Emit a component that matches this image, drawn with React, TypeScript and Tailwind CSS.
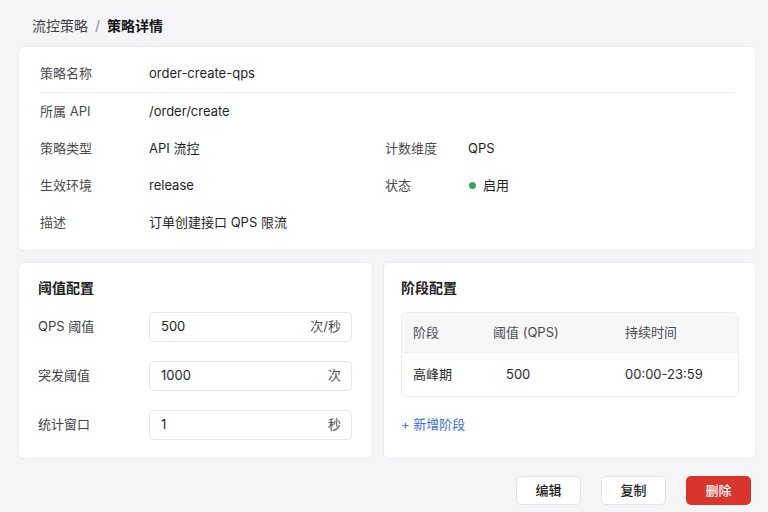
import React from "react";

const FONT = "font-['Inter','Noto_Sans_CJK_SC',sans-serif]";

function InfoRow({ label, value }: { label: string; value: React.ReactNode }) {
  return (
    <div className="flex w-[345px] items-center">
      <span className="w-[109px] text-[13px] text-[#4b4b50]">{label}</span>
      <span className="text-[13px] text-[#1f1f23]">{value}</span>
    </div>
  );
}

const THRESHOLDS = [
  { label: "QPS 阈值", value: "500", unit: "次/秒" },
  { label: "突发阈值", value: "1000", unit: "次" },
  { label: "统计窗口", value: "1", unit: "秒" },
];

export default function App() {
  return (
    <div className={`min-h-[512px] w-[768px] bg-[#f5f5f7] pl-[18px] pr-[12px] ${FONT}`}>
      <div className="flex h-[46px] items-start pl-[14px] pt-[17px] text-[14px] leading-[18px]">
        <span className="text-[#3f3f45]">流控策略</span>
        <span className="mx-[7px] text-[#8a8a90]">/</span>
        <span className="font-semibold text-[#16161a]">策略详情</span>
      </div>

      <div className="rounded-[6px] border border-[#ececef] bg-white pt-[9px] pb-[9px]">
        <div className="flex h-[36px] items-center px-[21px]">
          <InfoRow label="策略名称" value="order-create-qps" />
        </div>
        <div className="mx-[21px] h-px bg-[#f0f0f2]" />
        <div className="flex h-[37px] items-center px-[21px]">
          <InfoRow label="所属 API" value="/order/create" />
        </div>
        <div className="flex h-[37px] items-center px-[21px]">
          <InfoRow label="策略类型" value="API 流控" />
          <div className="flex items-center">
            <span className="w-[83px] text-[13px] text-[#4b4b50]">计数维度</span>
            <span className="text-[13px] text-[#1f1f23]">QPS</span>
          </div>
        </div>
        <div className="flex h-[37px] items-center px-[21px]">
          <InfoRow label="生效环境" value="release" />
          <div className="flex items-center">
            <span className="w-[83px] text-[13px] text-[#4b4b50]">状态</span>
            <span className="flex items-center text-[13px] text-[#1f1f23]">
              <span className="mr-[7px] ml-[1px] h-[7px] w-[7px] rounded-full bg-[#3aa65a]" />
              启用
            </span>
          </div>
        </div>
        <div className="flex h-[37px] items-center px-[21px]">
          <InfoRow label="描述" value="订单创建接口 QPS 限流" />
        </div>
      </div>

      <div className="mt-[11px] grid grid-cols-[355px_1fr] gap-[10px]">
        <div className="h-[197px] rounded-[6px] border border-[#ececef] bg-white pl-[19px] pr-[20px] pt-[16px]">
          <h3 className="text-[14px] font-semibold leading-[18px] text-[#1f1f23]">阈值配置</h3>
          <div className="mt-[15px] flex flex-col gap-[19px]">
            {THRESHOLDS.map((t) => (
              <div key={t.label} className="flex items-center">
                <span className="w-[111px] text-[13px] text-[#3f3f45]">{t.label}</span>
                <div className="flex h-[30px] flex-1 items-center justify-between rounded-[5px] border border-[#e4e4e8] bg-white pl-[11px] pr-[10px] text-[13px]">
                  <span className="text-[#1f1f23]">{t.value}</span>
                  <span className="text-[#4b4b50]">{t.unit}</span>
                </div>
              </div>
            ))}
          </div>
        </div>

        <div className="h-[197px] rounded-[6px] border border-[#ececef] bg-white pl-[17px] pr-[16px] pt-[16px]">
          <h3 className="text-[14px] font-semibold leading-[18px] text-[#1f1f23]">阶段配置</h3>
          <div className="mt-[15px] overflow-hidden rounded-[6px] border border-[#ececef] text-[13px]">
            <div className="flex h-[39px] items-center bg-[#f7f7f8] pl-[11px] text-[#4b4b50]">
              <span className="w-[80px]">阶段</span>
              <span className="w-[132px]">阈值 (QPS)</span>
              <span>持续时间</span>
            </div>
            <div className="flex h-[44px] items-center border-t border-[#f0f0f2] pl-[11px] text-[#2a2a2e]">
              <span className="w-[93px]">高峰期</span>
              <span className="w-[119px]">500</span>
              <span>00:00-23:59</span>
            </div>
          </div>
          <div className="mt-[18px] text-[13px] text-[#3a6fd6]">+ 新增阶段</div>
        </div>
      </div>

      <div className="mt-[17px] flex justify-end gap-[20px] pr-[5px]">
        <button className="h-[29px] w-[65px] rounded-[5px] border border-[#e4e4e8] bg-white text-[13px] font-medium text-[#1f1f23]">编辑</button>
        <button className="h-[29px] w-[65px] rounded-[5px] border border-[#e4e4e8] bg-white text-[13px] font-medium text-[#1f1f23]">复制</button>
        <button className="h-[29px] w-[65px] rounded-[5px] bg-[#d8352e] text-[13px] font-medium text-white">删除</button>
      </div>
    </div>
  );
}
